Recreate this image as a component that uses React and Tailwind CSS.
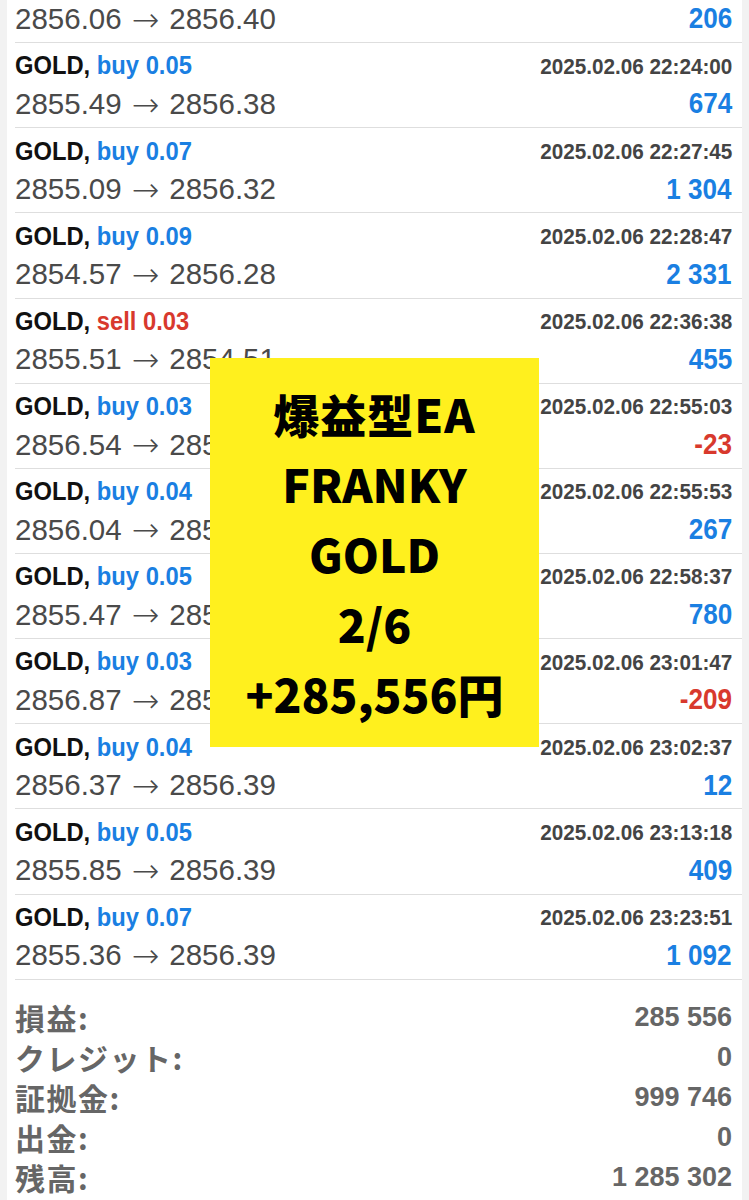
const trades = [
  { side: 'buy', lot: '0.03', time: '2025.02.06 22:21:12', open: '2856.06', close: '2856.40', profit: '206' },
  { side: 'buy', lot: '0.05', time: '2025.02.06 22:24:00', open: '2855.49', close: '2856.38', profit: '674' },
  { side: 'buy', lot: '0.07', time: '2025.02.06 22:27:45', open: '2855.09', close: '2856.32', profit: '1 304' },
  { side: 'buy', lot: '0.09', time: '2025.02.06 22:28:47', open: '2854.57', close: '2856.28', profit: '2 331' },
  { side: 'sell', lot: '0.03', time: '2025.02.06 22:36:38', open: '2855.51', close: '2854.51', profit: '455' },
  { side: 'buy', lot: '0.03', time: '2025.02.06 22:55:03', open: '2856.54', close: '2856.46', profit: '-23' },
  { side: 'buy', lot: '0.04', time: '2025.02.06 22:55:53', open: '2856.04', close: '2856.46', profit: '267' },
  { side: 'buy', lot: '0.05', time: '2025.02.06 22:58:37', open: '2855.47', close: '2856.52', profit: '780' },
  { side: 'buy', lot: '0.03', time: '2025.02.06 23:01:47', open: '2856.87', close: '2856.17', profit: '-209' },
  { side: 'buy', lot: '0.04', time: '2025.02.06 23:02:37', open: '2856.37', close: '2856.39', profit: '12' },
  { side: 'buy', lot: '0.05', time: '2025.02.06 23:13:18', open: '2855.85', close: '2856.39', profit: '409' },
  { side: 'buy', lot: '0.07', time: '2025.02.06 23:23:51', open: '2855.36', close: '2856.39', profit: '1 092' },
];

const summary = [
  ['損益:', '285 556'],
  ['クレジット:', '0'],
  ['証拠金:', '999 746'],
  ['出金:', '0'],
  ['残高:', '1 285 302'],
];

function TradeRow({ t }) {
  const sideColor = t.side === 'sell' ? 'text-[#d8392d]' : 'text-[#1a7fe2]';
  const profitColor = t.profit.startsWith('-') ? 'text-[#d8392d]' : 'text-[#1a7fe2]';
  return (
    <div className="ml-2 h-[85.15px] border-b border-[#dedede] pr-[10px] pt-[4px]">
      <div className="flex h-[38px] items-center justify-between">
        <span className="inline-block origin-left scale-x-95 whitespace-nowrap text-[25px] font-bold text-[#111]">
          GOLD, <span className={sideColor}>{t.side} {t.lot}</span>
        </span>
        <span className="inline-block origin-right scale-x-[0.94] whitespace-nowrap text-[22px] font-bold text-[#444]">{t.time}</span>
      </div>
      <div className="flex h-[38px] items-center justify-between">
        <span className="flex items-center whitespace-nowrap text-[29.5px] text-[#4a4a4a]">
          {t.open}
          <span className="mx-[10px] font-['DejaVu_Sans',sans-serif] text-[33px] font-light leading-none">→</span>
          {t.close}
        </span>
        <span className={`inline-block origin-right scale-x-90 whitespace-nowrap text-[29px] font-bold ${profitColor}`}>{t.profit}</span>
      </div>
    </div>
  );
}

export default function App() {
  return (
    <div className="flex h-[1200px] justify-center bg-[#f2f2f2] font-['Liberation_Sans','Noto_Sans_CJK_JP',sans-serif]">
      <div className="relative h-[1200px] w-[735px] overflow-hidden bg-white">
        <div className="-mt-[42px]">
          {trades.map((t, i) => (
            <TradeRow key={i} t={t} />
          ))}
        </div>

        <div className="pl-2 pr-[10px] pt-[18px]">
          {summary.map(([label, value]) => (
            <div key={label} className="flex h-[40px] items-center justify-between font-bold text-[#666]">
              <span className="font-['Noto_Sans_CJK_JP',sans-serif] text-[30px] tracking-[1.5px]">{label}</span>
              <span className="text-[27px]">{value}</span>
            </div>
          ))}
        </div>

        <div className="absolute left-[203px] top-[358px] flex h-[389px] w-[329px] flex-col items-center bg-[#fff01e] pt-[20px] font-['Noto_Sans_CJK_JP',sans-serif] text-[46px] font-black leading-[70px] text-black">
          <span className="tracking-[1px]">爆益型EA</span>
          <span>FRANKY</span>
          <span>GOLD</span>
          <span>2/6</span>
          <span>+285,556円</span>
        </div>
      </div>
    </div>
  );
}
